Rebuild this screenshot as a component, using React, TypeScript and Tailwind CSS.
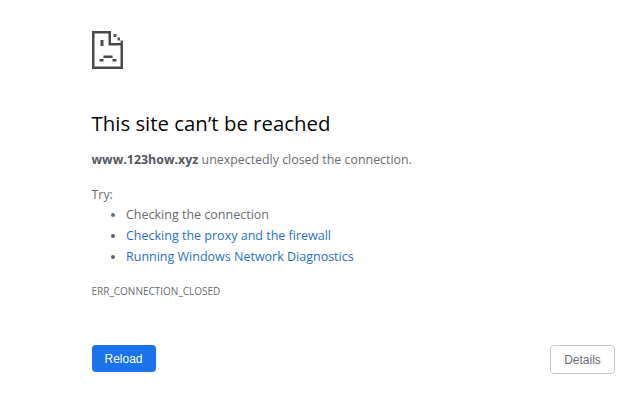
import React from 'react';

const SadPage = () => (
  <svg width="32" height="38" viewBox="0 0 32 38" fill="none" className="block">
    <path d="M19 1.25H1.25V36.75H29.75V13.25H17.75V1.25" stroke="#4a4a4a" strokeWidth="2.5" />
    <rect x="21.5" y="3" width="3" height="3" fill="#5a5a5a" />
    <rect x="25.5" y="6.5" width="2.5" height="3" fill="#5a5a5a" />
    <rect x="28.5" y="9.5" width="2.5" height="2.5" fill="#5a5a5a" />
    <rect x="8.5" y="9" width="3" height="6" fill="#4a4a4a" />
    <rect x="11.5" y="24.5" width="9" height="2.5" fill="#4a4a4a" />
    <rect x="7.5" y="28" width="4" height="2.5" fill="#4a4a4a" />
    <rect x="20.5" y="28" width="4" height="2.5" fill="#4a4a4a" />
  </svg>
);

export default function App() {
  return (
    <div className="w-[640px] h-[412px] bg-white overflow-hidden pl-[91.5px] pr-[25px] pt-[31px] flex flex-col font-['Open_Sans','Noto_Sans',sans-serif]">
      <SadPage />
      <h1 className="mt-[39.5px] text-[20.4px] leading-[28px] font-medium text-[#050506]">This site can’t be reached</h1>
      <p className="mt-[14.5px] text-[12.4px] leading-[18px] text-[#6a6d71]">
        <strong className="font-bold text-[#55585c]">www.123how.xyz</strong> unexpectedly closed the connection.
      </p>
      <p className="mt-[17px] text-[12.4px] leading-[18px] text-[#6a6d71]">Try:</p>
      <ul className="pl-[34.5px] list-disc text-[12.5px] leading-[21px] text-[#6a6d71]">
        <li>Checking the connection</li>
        <li className="text-[#2a6fc9] marker:text-[#5f6368]">Checking the proxy and the firewall</li>
        <li className="text-[#2a6fc9] marker:text-[#5f6368]">Running Windows Network Diagnostics</li>
      </ul>
      <p className="mt-[17px] text-[10px] leading-[14px] text-[#6a6d71]">ERR_CONNECTION_CLOSED</p>
      <div className="mt-[47px] flex items-start justify-between font-['Liberation_Sans',sans-serif] text-[12px]">
        <button className="w-[64px] h-[27px] rounded-[4px] bg-[#1a73e8] text-white">Reload</button>
        <button className="w-[65px] h-[29px] rounded-[4px] border border-[#c4c6c9] bg-white text-[#6a6d71]">Details</button>
      </div>
    </div>
  );
}
